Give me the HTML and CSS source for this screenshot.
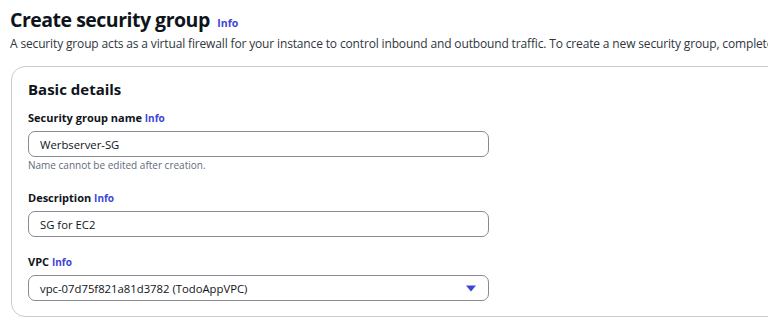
FILE: index.html
```html
<!DOCTYPE html>
<html lang="en">

<head>
    <meta charset="UTF-8">
    <meta name="viewport" content="width=device-width, initial-scale=1.0">
    <title>Create security group</title>
    <link rel="stylesheet" href="styles.css">
</head>

<body>
    <header class="page-head">
        <h1>Create security group <a class="info" href="#">Info</a></h1>
        <p class="lead">A security group acts as a virtual firewall for your instance to control inbound and outbound traffic. To create a new security group, complete the fields below.</p>
    </header>

    <section class="panel">
        <h2>Basic details</h2>

        <div class="field">
            <label class="label" for="sg-name">Security group name <a class="info" href="#">Info</a></label>
            <input class="input" id="sg-name" type="text" value="Werbserver-SG">
            <p class="hint">Name cannot be edited after creation.</p>
        </div>

        <div class="field">
            <label class="label" for="sg-desc">Description <a class="info" href="#">Info</a></label>
            <input class="input" id="sg-desc" type="text" value="SG for EC2">
        </div>

        <div class="field">
            <span class="label">VPC <a class="info" href="#">Info</a></span>
            <div class="input select">
                <span>vpc-07d75f821a81d3782 (TodoAppVPC)</span>
                <svg class="caret" width="10" height="7" viewBox="0 0 10 7"><path d="M0 0.5h10L5 6.5z" fill="#3b45d6"/></svg>
            </div>
        </div>
    </section>
</body>

</html>
```
FILE: styles.css
```css
* {
    box-sizing: border-box;
}
html,
body {
    margin: 0;
    padding: 0;
    overflow: hidden;
    background: #fff;
    font-family: 'Open Sans', 'Noto Sans', sans-serif;
    color: #0f141a;
}
body {
    padding: 7px 0 0 10px;
}
a.info {
    color: #3b45d6;
    font-weight: 700;
    text-decoration: none;
    line-height: 1;
}
h1 {
    margin: 0;
    font-size: 19.5px;
    line-height: 26px;
    font-weight: 700;
    letter-spacing: -0.5px;
    white-space: nowrap;
}
h1 .info {
    font-size: 10.5px;
    letter-spacing: 0;
    margin-left: 3px;
}
.lead {
    margin: 3px 0 0;
    font-size: 12px;
    line-height: 16px;
    letter-spacing: -0.15px;
    color: #2f363d;
    white-space: nowrap;
}
.panel {
    margin: 14px -40px 0 1px;
    padding: 12px 16px 15px;
    border: 1px solid #cacad0;
    border-radius: 14px;
}
h2 {
    margin: 0;
    font-size: 15px;
    line-height: 20px;
    font-weight: 700;
}
.field {
    display: flex;
    flex-direction: column;
    align-items: flex-start;
    margin-top: 17px;
}
h2 + .field {
    margin-top: 11px;
}
.label {
    font-size: 11px;
    line-height: 15px;
    font-weight: 700;
    margin-bottom: 6px;
}
.label .info {
    font-size: 10px;
}
.input {
    width: 461px;
    height: 26px;
    margin: 0;
    padding: 0 11px;
    border: 1px solid #8a8a92;
    border-radius: 7px;
    font-family: inherit;
    font-size: 11.3px;
    color: #0f141a;
    background: #fff;
    outline: none;
}
.select {
    display: flex;
    align-items: center;
    justify-content: space-between;
    padding-right: 12px;
}
.caret {
    display: block;
}
.hint {
    margin: 1px 0 1px;
    font-size: 10px;
    line-height: 14px;
    color: #5f6b7a;
}
```
